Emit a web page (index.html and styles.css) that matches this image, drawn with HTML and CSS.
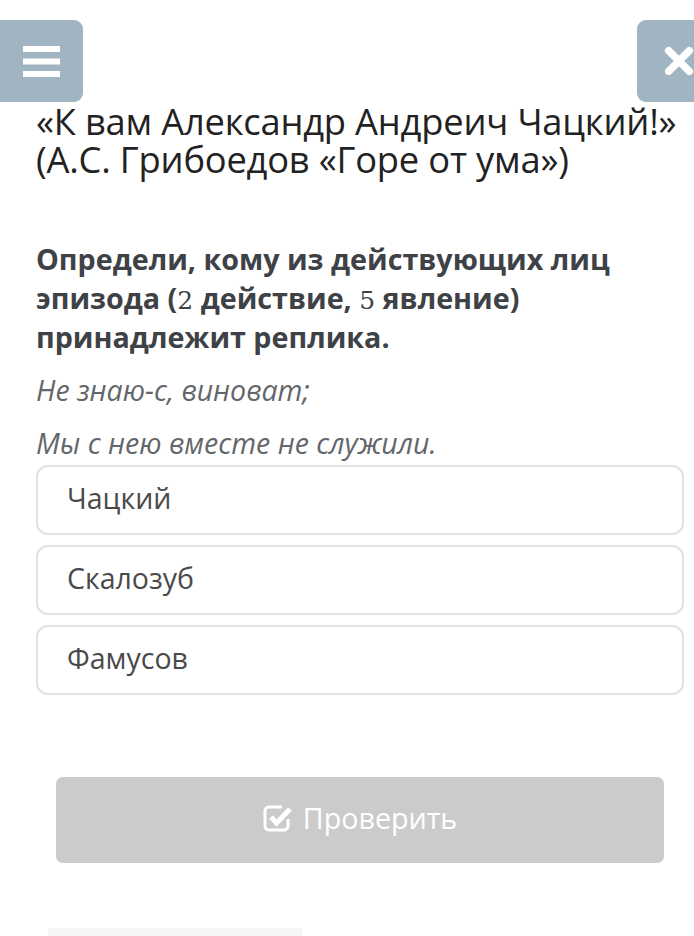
FILE: index.html
```html
<!DOCTYPE html>
<html lang="ru">
<head>
<meta charset="utf-8">
<link rel="stylesheet" href="styles.css">
</head>
<body>
<div class="page">
  <header class="topbar">
    <div class="tb-btn tb-menu">
      <svg width="37" height="31" viewBox="0 0 37 31"><rect x="0" y="0" width="37" height="6" fill="#fff"/><rect x="0" y="12.5" width="37" height="6" fill="#fff"/><rect x="0" y="25" width="37" height="6" fill="#fff"/></svg>
    </div>
    <div class="tb-btn tb-close">
      <svg width="32" height="32" viewBox="0 0 32 32"><path d="M5 5 L27 27 M27 5 L5 27" stroke="#fff" stroke-width="8" stroke-linecap="round"/></svg>
    </div>
  </header>
  <h1 class="title">«К вам Александр Андреич Чацкий!» (А.С. Грибоедов «Горе от ума»)</h1>
  <p class="question">Определи, кому из действующих лиц эпизода (<span class="num">2</span> действие, <span class="num">5</span> явление) принадлежит реплика.</p>
  <p class="quote">Не знаю-с, виноват;</p>
  <p class="quote">Мы с нею вместе не служили.</p>
  <div class="options">
    <div class="option">Чацкий</div>
    <div class="option">Скалозуб</div>
    <div class="option">Фамусов</div>
  </div>
  <div class="actions">
    <button class="check-btn">
      <svg width="30" height="28" viewBox="0 0 30 28"><path d="M19 3 H6 a4 4 0 0 0 -4 4 V22 a4 4 0 0 0 4 4 H21 a4 4 0 0 0 4 -4 V15" fill="none" stroke="#fff" stroke-width="3"/><path d="M8 13 L13.5 19 L27 5" fill="none" stroke="#fff" stroke-width="5" stroke-linejoin="miter"/></svg>
      <span>Проверить</span>
    </button>
  </div>
  <div class="footer-bar"></div>
</div>
</body>
</html>
```
FILE: styles.css
```css
html, body {
  margin: 0;
  padding: 0;
  background: #ffffff;
}
body {
  font-family: "Open Sans", "Noto Sans", sans-serif;
  color: #3d4146;
  overflow: hidden;
}
.page {
  width: 694px;
  height: 936px;
  position: relative;
}
.topbar {
  display: flex;
  justify-content: space-between;
  padding-top: 20px;
  height: 82px;
}
.tb-btn {
  background: #a0b4c1;
  height: 82px;
  display: flex;
  align-items: center;
}
.tb-menu {
  width: 83px;
  border-radius: 0 9px 9px 0;
  justify-content: center;
}
.tb-close {
  width: 57px;
  border-radius: 9px 0 0 9px;
  padding-left: 27px;
  box-sizing: border-box;
}
.title {
  margin: 0 0 0 36px;
  font-weight: 400;
  font-size: 36.3px;
  line-height: 38px;
  color: #222;
  letter-spacing: -0.2px;
}
.question {
  margin: 61px 20px 0 36px;
  font-weight: 700;
  font-size: 28.7px;
  line-height: 39px;
  color: #3e4247;
}
.num {
  font-family: "DejaVu Serif", "Liberation Serif", serif;
  font-weight: 400;
  font-size: 25px;
  line-height: 0;
}
.quote {
  margin: 15px 0 0 36px;
  font-style: italic;
  font-size: 28.5px;
  line-height: 38px;
  color: #63676b;
}
.quote + .quote {
  margin-top: 15px;
}
.options {
  margin: 3px 10px 0 36px;
  display: flex;
  flex-direction: column;
  gap: 10px;
}
.option {
  height: 70px;
  box-sizing: border-box;
  border: 2px solid #e2e2e2;
  border-radius: 12px;
  padding: 0 0 5px 29px;
  display: flex;
  align-items: center;
  font-size: 28.5px;
  color: #4a4a4a;
}
.actions {
  margin: 82px 30px 0 56px;
}
.check-btn {
  width: 608px;
  height: 86px;
  border: none;
  border-radius: 7px;
  background: #cbcbcb;
  color: #fff;
  font-family: "Open Sans", "Noto Sans", sans-serif;
  font-size: 28.7px;
  display: flex;
  align-items: center;
  justify-content: center;
  gap: 10px;
  padding: 0 0 5px 0;
}
.footer-bar {
  position: absolute;
  left: 48px;
  top: 928px;
  width: 254px;
  height: 8px;
  background: #f5f5f5;
}
```
